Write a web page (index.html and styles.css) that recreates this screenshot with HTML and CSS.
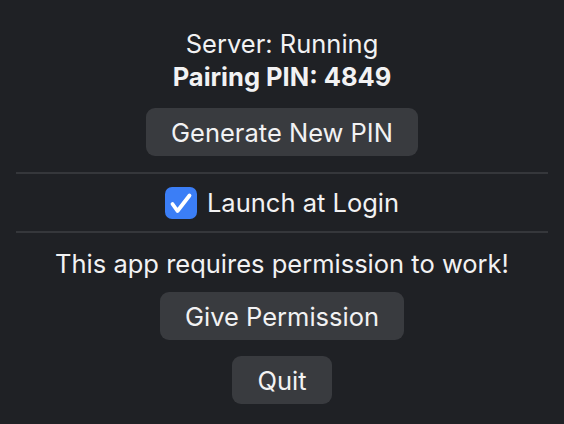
FILE: index.html
```html
<!DOCTYPE html>
<html lang="en">

<head>
    <meta charset="UTF-8">
    <meta name="viewport" content="width=device-width, initial-scale=1.0">
    <title>Menu</title>
    <link rel="stylesheet" href="styles.css">
</head>

<body>
    <div class="menu">
        <div class="status">Server: Running</div>
        <div class="status pin">Pairing PIN: 4849</div>
        <button class="btn btn-pin">Generate New PIN</button>

        <div class="separator"></div>

        <label class="login-row">
            <span class="check">
                <svg width="32" height="32" viewBox="0 0 32 32">
                    <path d="M7.5 17 L12.5 24 L24.5 8.5" fill="none" stroke="#fff" stroke-width="3.8" stroke-linecap="round" stroke-linejoin="round" />
                </svg>
            </span>
            Launch at Login
        </label>

        <div class="separator"></div>

        <div class="notice">This app requires permission to work!</div>
        <button class="btn btn-permission">Give Permission</button>
        <button class="btn btn-quit">Quit</button>
    </div>
</body>

</html>
```

FILE: styles.css
```css
body {
    font-family: Inter, "Noto Sans", sans-serif;
    background-color: #1f2125;
    color: #f2f2f3;
    margin: 0;
    padding: 0;
}

.menu {
    display: flex;
    flex-direction: column;
    align-items: center;
    padding-top: 27px;
}

.status {
    font-size: 25.5px;
    line-height: 33px;
}

.pin {
    font-weight: 700;
}

.btn {
    font-family: inherit;
    font-size: 25.5px;
    color: #f2f2f3;
    background-color: #393b3f;
    border: none;
    border-radius: 9px;
    height: 48px;
    padding: 0 25px;
    cursor: pointer;
}

.btn-pin {
    margin-top: 15px;
}

.separator {
    align-self: stretch;
    height: 2px;
    margin: 16px 16px 0;
    background-color: #35373b;
}

.login-row {
    display: flex;
    align-items: center;
    gap: 10px;
    font-size: 25.5px;
    height: 57px;
}

.login-row + .separator {
    margin-top: 0;
}

.check {
    display: flex;
    width: 32px;
    height: 32px;
    border-radius: 7px;
    background-color: #3b7ef6;
}

.notice {
    font-size: 25.5px;
    line-height: 33px;
    margin-top: 14px;
}

.btn-permission {
    margin-top: 12px;
}

.btn-quit {
    margin-top: 16px;
}
```
